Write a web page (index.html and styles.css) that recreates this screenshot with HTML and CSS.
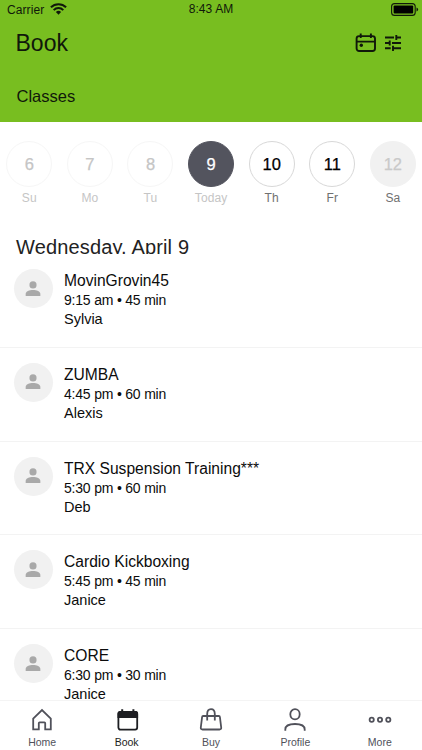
FILE: index.html
```html
<!DOCTYPE html>
<html lang="en">
<head>
<meta charset="utf-8">
<title>Book</title>
<link rel="stylesheet" href="styles.css">
</head>
<body>
<svg class="defs" width="0" height="0"><symbol id="person" viewBox="0 0 24 24"><circle cx="12" cy="7.500" r="3.900" fill="#a9a9a9"/><path d="M4 19.500v-2c0-3 4-4.300 8-4.300s8 1.300 8 4.300v2z" fill="#a9a9a9"/></symbol></svg>
<div class="app">
  <header class="header">
    <div class="status">
      <div class="carrier"><span>Carrier</span>
        <svg width="17" height="12" viewBox="0 0 17 12" fill="none" stroke="#10180a" stroke-width="2"><path d="M.9 4.300a10.800 10.800 0 0 1 15.200 0"/><path d="M3.700 7.100a6.800 6.800 0 0 1 9.600 0"/><path d="M8.500 11.700 5.900 9.100a3.700 3.700 0 0 1 5.200 0z" fill="#10180a" stroke="none"/></svg>
      </div>
      <div class="clock">8:43 AM</div>
      <svg class="battery" width="28" height="13" viewBox="0 0 28 13"><rect x=".6" y=".6" width="23.600" height="11.800" rx="3" fill="none" stroke="#10180a" stroke-width="1.100"/><rect x="2.600" y="2.600" width="19.600" height="7.800" rx="1" fill="#000"/><path d="M25.500 4.500q1.600.5 1.600 2t-1.600 2z" fill="#10180a"/></svg>
    </div>
    <div class="titlebar">
      <h1>Book</h1>
      <div class="actions">
        <svg width="22" height="20" viewBox="0 0 22 20" fill="none" stroke="#10180a" stroke-width="1.900"><rect x="1.600" y="3.100" width="18.400" height="14.900" rx="2.500"/><path d="M1.600 8.600h18.400M5.700 .6v4.400M15.900 .6v4.400"/><circle cx="6.300" cy="12.200" r="1.700" fill="#10180a" stroke="none"/></svg>
        <svg width="18" height="18" viewBox="0 0 18 18" fill="none" stroke="#10180a" stroke-width="1.900"><path d="M1 3.500h9M12.300 .9v5.200M12.300 3.500h4.700M1 9h4.700M5.700 6.400v5.200M8 9h9M1 14.300h5.700M9 11.700v5.200M9 14.300h8"/></svg>
      </div>
    </div>
    <div class="section">Classes</div>
  </header>
  <nav class="days">
    <div class="day past"><b>6</b><span>Su</span></div>
    <div class="day past"><b>7</b><span>Mo</span></div>
    <div class="day past"><b>8</b><span>Tu</span></div>
    <div class="day today"><b>9</b><span>Today</span></div>
    <div class="day"><b>10</b><span>Th</span></div>
    <div class="day"><b>11</b><span>Fr</span></div>
    <div class="day off"><b>12</b><span>Sa</span></div>
  </nav>
  <h2>Wednesday, April 9</h2>
  <main class="list">
    <article class="row"><div class="avatar"><svg><use href="#person"/></svg></div><div class="info"><div class="name">MovinGrovin45</div><div class="time">9:15 am • 45 min</div><div class="coach">Sylvia</div></div></article>
    <article class="row"><div class="avatar"><svg><use href="#person"/></svg></div><div class="info"><div class="name">ZUMBA</div><div class="time">4:45 pm • 60 min</div><div class="coach">Alexis</div></div></article>
    <article class="row"><div class="avatar"><svg><use href="#person"/></svg></div><div class="info"><div class="name">TRX Suspension Training***</div><div class="time">5:30 pm • 60 min</div><div class="coach">Deb</div></div></article>
    <article class="row"><div class="avatar"><svg><use href="#person"/></svg></div><div class="info"><div class="name">Cardio Kickboxing</div><div class="time">5:45 pm • 45 min</div><div class="coach">Janice</div></div></article>
    <article class="row"><div class="avatar"><svg><use href="#person"/></svg></div><div class="info"><div class="name">CORE</div><div class="time">6:30 pm • 30 min</div><div class="coach">Janice</div></div></article>
  </main>
  <footer class="tabs">
    <div class="tab"><svg viewBox="0 0 24 24"><path d="M3.200 10.600 12 2l8.800 8.600v10.700h-5.600v-6.100q0-.8-.8-.8H9.600q-.8 0-.8.800v6.100H3.200z"/></svg><span>Home</span></div>
    <div class="tab active"><svg viewBox="0 0 24 24"><rect x="3.400" y="4" width="18.800" height="17.600" rx="2"/><path d="M2.500 10V5.500Q2.500 3 5 3h1.200V1.300h2V3h9.200V1.300h2V3h1.200q2.500 0 2.500 2.500V10z" fill="#1d1e22" stroke="none"/></svg><span>Book</span></div>
    <div class="tab"><svg viewBox="0 0 24 24"><path d="M4.200 8h15.600q1 0 1.100 1l1.300 10.500q.2 2-1.700 2H3.500q-1.900 0-1.700-2L3.100 9q.1-1 1.100-1zM8.200 12.500V6q0-4.800 3.800-4.800T15.800 6v6.500"/></svg><span>Buy</span></div>
    <div class="tab"><svg viewBox="0 0 24 24"><ellipse cx="12" cy="6.200" rx="4.700" ry="5.100"/><path d="M2.300 22.700v-1.200C2.300 18.200 6 16 12 16s9.700 2.200 9.700 5.500v1.200"/></svg><span>Profile</span></div>
    <div class="tab"><svg viewBox="0 0 24 24"><circle cx="3.700" cy="11.700" r="2.100"/><circle cx="12" cy="11.700" r="2.100"/><circle cx="20.300" cy="11.700" r="2.100"/></svg><span>More</span></div>
  </footer>
</div>
</body>
</html>
```
FILE: styles.css
```css
* { box-sizing: border-box; }
body { margin: 0; background: #fff; color: #0c0c0c; font-family: "Liberation Sans", Arial, sans-serif; }
.defs { display: block; }
.app { display: flex; flex-direction: column; width: 422px; height: 750px; overflow: hidden; }
.header { flex: none; height: 122px; background: #78be20; color: #10180a; }
.status { display: grid; grid-template-columns: 1fr auto 1fr; height: 19px; padding: 0 3px 0 7px; font-size: 12px; line-height: 19px; }
.carrier { display: flex; gap: 6px; }
.carrier span { letter-spacing: .08px; line-height: 20px; }
.carrier svg { margin-top: 3px; }
.clock { padding-right: 4px; letter-spacing: .1px; }
.battery { justify-self: end; margin-top: 3px; }
.titlebar { display: flex; justify-content: space-between; height: 48px; padding: 0 20.500px 0 15.500px; }
h1 { margin: 0; font-size: 23px; font-weight: 400; line-height: 48px; }
.actions { display: flex; align-items: center; gap: 7px; }
.section { padding: 17px 16.500px 0; font-size: 16.500px; line-height: 24px; }
.days { flex: none; display: grid; grid-template-columns: repeat(7, 60.600px); height: 112px; padding: 19px 0 0; margin-left: -1px; }
.day { display: flex; flex-direction: column; align-items: center; color: #000; }
.day b { width: 46px; height: 46px; border: 1px solid #d8d8d8; border-radius: 50%; font-size: 16.500px; font-weight: 400; line-height: 45px; text-align: center; -webkit-text-stroke: .25px currentColor; }
.day span { margin-top: 3px; font-size: 12px; line-height: 16px; color: #707070; letter-spacing: .1px; }
.past b { border-color: #f6f6f6; color: #c5c5c5; }
.past span, .today span { color: #c5c5c5; }
.today b { border-color: #53545e; background: #53545e; color: #fff; }
.off b { border-color: #f1f1f1; background: #f1f1f1; color: #c9c9c9; }
h2 { flex: none; margin: 0; height: 20px; padding-left: 16px; overflow: hidden; font-size: 20px; font-weight: 400; line-height: 26px; letter-spacing: .15px; color: #222; }
.list { flex: 1; min-height: 0; overflow: hidden; }
.row { display: flex; gap: 11.500px; height: 93.750px; padding: 15px 13.500px 0; border-bottom: 1px solid #f3f3f3; }
.avatar { flex: none; display: grid; place-items: center; width: 39px; height: 39px; border-radius: 50%; background: #f1f1f1; }
.avatar svg { display: block; width: 22px; height: 22px; }
.name { padding-top: 2px; font-size: 15.600px; line-height: 20px; }
.time { font-size: 14px; line-height: 19px; letter-spacing: -.2px; }
.coach { font-size: 14.500px; line-height: 19px; }
.tabs { flex: none; display: grid; grid-template-columns: repeat(5, 1fr); height: 50px; border-top: 1px solid #f4f4f4; background: #fff; }
.tab { display: flex; flex-direction: column; align-items: center; padding-top: 7px; font-size: 10.500px; line-height: 13px; color: #50515a; }
.tab svg { width: 24px; height: 24px; margin-bottom: 4px; fill: none; stroke: currentColor; stroke-width: 1.800; overflow: visible; }
.tab.active { color: #1d1e22; }
```
